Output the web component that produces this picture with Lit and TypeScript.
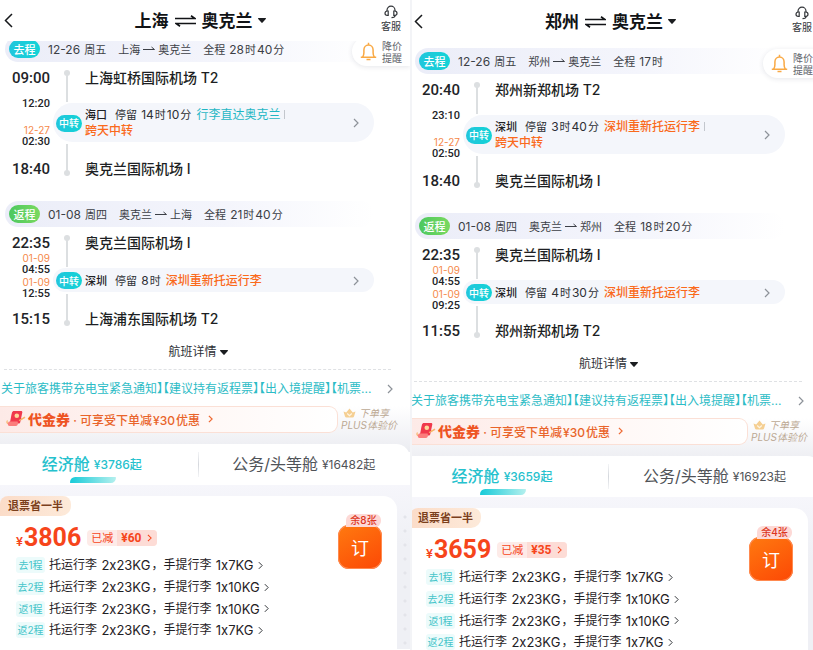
import { LitElement, html, css, svg } from "lit";
import { customElement, property } from "lit/decorators.js";
import { classMap } from "lit/directives/class-map.js";

interface Leg {
  kind: "out" | "back";
  label: string;
  date: string;
  from: string;
  to: string;
  total: string;
  depart: string;
  arrive: string;
  first: string[];
  second: string[];
  fromPort: string;
  toPort: string;
  city: string;
  stay: string;
  note: string;
  noteTone: "teal" | "orange";
  extra?: string;
}

interface Trip {
  from: string;
  to: string;
  legs: Leg[];
  economy: string;
  business: string;
  price: string;
  cut: string;
  left: string;
}

const TRIPS: Trip[] = [
  {
    from: "上海", to: "奥克兰", economy: "3786", business: "16482", price: "3806", cut: "60", left: "8",
    legs: [
      {
        kind: "out", label: "去程", date: "12-26 周五", from: "上海", to: "奥克兰", total: "全程 28时40分",
        depart: "09:00", arrive: "18:40", first: ["12:20"], second: ["12-27", "02:30"],
        fromPort: "上海虹桥国际机场 T2", toPort: "奥克兰国际机场 I",
        city: "海口", stay: "停留 14时10分", note: "行李直达奥克兰", noteTone: "teal", extra: "跨天中转",
      },
      {
        kind: "back", label: "返程", date: "01-08 周四", from: "奥克兰", to: "上海", total: "全程 21时40分",
        depart: "22:35", arrive: "15:15", first: ["01-09", "04:55"], second: ["01-09", "12:55"],
        fromPort: "奥克兰国际机场 I", toPort: "上海浦东国际机场 T2",
        city: "深圳", stay: "停留 8时", note: "深圳重新托运行李", noteTone: "orange",
      },
    ],
  },
  {
    from: "郑州", to: "奥克兰", economy: "3659", business: "16923", price: "3659", cut: "35", left: "4",
    legs: [
      {
        kind: "out", label: "去程", date: "12-26 周五", from: "郑州", to: "奥克兰", total: "全程 17时",
        depart: "20:40", arrive: "18:40", first: ["23:10"], second: ["12-27", "02:50"],
        fromPort: "郑州新郑机场 T2", toPort: "奥克兰国际机场 I",
        city: "深圳", stay: "停留 3时40分", note: "深圳重新托运行李", noteTone: "orange", extra: "跨天中转",
      },
      {
        kind: "back", label: "返程", date: "01-08 周四", from: "奥克兰", to: "郑州", total: "全程 18时20分",
        depart: "22:35", arrive: "11:55", first: ["01-09", "04:55"], second: ["01-09", "09:25"],
        fromPort: "奥克兰国际机场 I", toPort: "郑州新郑机场 T2",
        city: "深圳", stay: "停留 4时30分", note: "深圳重新托运行李", noteTone: "orange",
      },
    ],
  },
];

const BAGGAGE = [
  ["去1程", "1x7KG"],
  ["去2程", "1x10KG"],
  ["返1程", "1x10KG"],
  ["返2程", "1x7KG"],
];

/* Latin runs get their own size next to Chinese characters. */
const mix = (text: string) =>
  text.split(/([\x21-\x7e¥]+)/).map((part, i) => (i % 2 ? html`<span class="num">${part}</span>` : part));

const chevron = html`<svg class="chev" viewBox="0 0 6 10" aria-hidden="true">${svg`<path d="M1 1l4 4-4 4"/>`}</svg>`;
const caret = html`<svg class="caret" viewBox="0 0 8 5" aria-hidden="true">${svg`<path d="M.6 0h6.800c.6 0 .8.600.400 1L4.600 4.600a.8.8 0 0 1-1.200 0L.2 1C-.2.6 0 0 .6 0z"/>`}</svg>`;

@customElement("trip-leg")
export class TripLeg extends LitElement {
  @property({ attribute: false }) leg!: Leg;

  static styles = css`
    :host { display: block; }
    .num { margin: 0 1px; font-size: 12px; }
    .bar {
      display: flex; align-items: center; gap: 7px; height: 26px; box-sizing: border-box;
      margin: 0 36px 6px 5px; padding-left: 4px; border-radius: 13px;
      background: linear-gradient(90deg, #ebedf8, #f4f5fc 60%, #ffffff);
      font-size: 11px; color: #3c3f46; white-space: pre;
    }
    .badge {
      flex: none; display: grid; place-items: center; color: #fff; font-weight: 500; font-size: 11px;
      width: 31px; height: 18px; border-radius: 9px; background: linear-gradient(90deg, #22c6dc, #12d3d6);
    }
    .badge.back { background: linear-gradient(90deg, #4cc860, #7ad95f); }
    .info { display: flex; align-items: center; gap: 12px; }
    .route { display: flex; align-items: center; gap: 3px; }
    .route svg { width: 12px; height: 6px; fill: none; stroke: #3c3f46; }
    .body { display: grid; grid-template-columns: 50px 1fr; column-gap: 3px; margin-right: 36px; }
    .times { display: flex; flex-direction: column; text-align: right; font-family: Roboto, "Liberation Sans", sans-serif; }
    .big { font-size: 15px; line-height: 20px; font-weight: 500; color: #222428; }
    .mid { flex: 1; display: flex; flex-direction: column; justify-content: space-between; padding: 10px 0 12px; font-size: 11px; line-height: 11px; font-weight: 500; color: #222428; }
    .mid.late { padding: 0 0 10px; }
    .mid span { display: block; }
    .mid .day { font: 400 10px/11px Inter, sans-serif; color: #f5894a; }
    .stop { display: flex; gap: 4px; height: 35px; font-size: 14px; line-height: 19px; font-weight: 500; color: #1d1f23; }
    .stop .num { margin: 0; font-size: 14px; }
    .stop.end { height: 37px; }
    .stop.end .port { align-self: flex-end; padding-bottom: 1px; }
    .rail { width: 28px; display: flex; justify-content: center; padding-top: 2px; }
    .rail svg { width: 6px; height: 32px; fill: #dcdfe1; }
    .stop.end .rail svg { transform: rotate(180deg); }
    .transfer {
      display: flex; align-items: center; gap: 4px; width: 100%; box-sizing: border-box; border: 0; text-align: left;
      min-height: 24px; padding: 4px 15px 3px 3px; border-radius: 20px; background: #f4f6fb; font: inherit;
      font-size: 11px; line-height: 16px; color: #1f2125;
    }
    .transfer .badge { width: 26px; height: 17px; margin-right: -1px; font-size: 10px; }
    .text { flex: 1; }
    .stay { margin: 0 2px 0 5px; color: #2c2f34; }
    .city { font-weight: 500; }
    .teal, .orange { font-size: 12px; }
    .teal { color: #1fb6c4; }
    .orange { color: #fa6a1c; font-weight: 500; }
    .sep { display: inline-block; width: 1px; height: 9px; margin-left: 4px; background: #c3c7cd; }
    .chev { width: 6px; height: 10px; fill: none; stroke: #8d9299; stroke-width: 1.2; }
  `;

  private times(list: string[]) {
    return html`<div>${list.map((t) => html`<span class=${t.includes("-") ? "day" : ""}>${t}</span>`)}</div>`;
  }

  private rail() {
    return html`<div class="rail"><svg viewBox="0 0 6 32" aria-hidden="true"><circle cx="3" cy="3" r="3" /><path d="M2 3h2v29H2z" /></svg></div>`;
  }

  render() {
    const l = this.leg;
    return html`
      <div class="bar">
        <span class=${classMap({ badge: true, back: l.kind === "back" })}>${l.label}</span>
        <div class="info">
          <span>${mix(l.date)}</span>
          <span class="route">${l.from}<svg viewBox="0 0 12 6" aria-hidden="true"><path d="M0 3.500h11.500L8.500 1" /></svg>${l.to}</span>
          <span>${mix(l.total)}</span>
        </div>
      </div>
      <div class="body">
        <div class="times">
          <span class="big">${l.depart}</span>
          <div class=${classMap({ mid: true, late: l.first.length > 1 })}>${this.times(l.first)}${this.times(l.second)}</div>
          <span class="big">${l.arrive}</span>
        </div>
        <div>
          <div class="stop">${this.rail()}<span class="port">${mix(l.fromPort)}</span></div>
          <button class="transfer">
            <span class="badge">中转</span>
            <span class="text">
              <span class="city">${l.city}</span><span class="stay">&nbsp;${mix(l.stay)}</span>
              <span class=${l.noteTone}>${l.note}</span>${l.extra ? html`<span class="sep"></span><br /><span class="orange">${l.extra}</span>` : ""}
            </span>
            ${chevron}
          </button>
          <div class="stop end">${this.rail()}<span class="port">${mix(l.toPort)}</span></div>
        </div>
      </div>
    `;
  }
}

@customElement("trip-panel")
export class TripPanel extends LitElement {
  @property({ attribute: false }) trip!: Trip;

  static styles = css`
    :host { display: flex; flex-direction: column; min-width: 0; min-height: 0; overflow: hidden; background: #fff; }
    button { border: 0; padding: 0; background: none; font: inherit; color: inherit; }
    a { color: inherit; text-decoration: none; }
    .caret { width: 8px; height: 5px; fill: #1b1d20; }
    .chev { flex: none; width: 6px; height: 10px; fill: none; stroke: #8d9299; stroke-width: 1.2; }
    header { flex: none; display: grid; grid-template-columns: 28px 1fr 28px; align-items: center; height: 41px; margin: 0 var(--cut-end, 0) 0 var(--cut-start, 0); padding: 0 5px 0 4px; }
    .backbtn svg { display: block; width: 9px; height: 15px; fill: none; stroke: #16181b; stroke-width: 1.5; }
    .title { display: flex; align-items: center; justify-content: center; gap: 6px; margin: 0; padding-right: 9px; font-size: 17px; line-height: 22px; font-weight: 700; color: #111316; }
    .title .swap { width: 21px; height: 12px; fill: none; stroke: #111316; stroke-width: 1.700; }
    .title .caret { margin-left: -1px; }
    .help { align-self: start; display: flex; flex-direction: column; align-items: center; gap: 1px; padding-top: 5px; font-size: 10px; line-height: 12px; color: #33363a; white-space: nowrap; }
    .help svg { width: 14px; height: 14px; fill: none; stroke: #33363a; stroke-width: 1.2; }
    .scroll { flex: 1; min-height: 0; display: flex; overflow: hidden auto; scrollbar-width: none; }
    .sheet { position: relative; flex: 1 0 auto; width: calc(100% - var(--cut-start, 0px) - var(--cut-end, 0px)); height: max-content; min-height: 100%; display: flex; flex-direction: column; margin: var(--pull) var(--cut-end, 0) 0 var(--cut-start, 0); }
    .alert {
      position: absolute; top: 1px; right: 0; display: flex; align-items: center; gap: 5px; width: 58px; height: 29px; box-sizing: border-box; padding-left: 8px;
      border-radius: 15px 0 0 15px; background: #fff; box-shadow: 0 1px 5px rgba(40, 50, 80, 0.12); font-size: 10px; line-height: 12px; color: #63666c; text-align: left;
    }
    .alert svg { flex: none; width: 17px; height: 19px; fill: none; stroke: #f9a944; stroke-width: 1.500; }
    trip-leg + trip-leg { margin-top: 22px; }
    .details { display: flex; align-items: center; justify-content: center; gap: 3px; margin: 15px 14px 0 0; font-size: 12px; line-height: 16px; color: #2e3136; }
    .rule { margin: 9px 19px 0 4px; border-top: 1px dashed #dfe1e4; }
    .notice { display: flex; align-items: center; justify-content: space-between; margin: 10px 17px 0 1px; font-size: 12px; line-height: 18px; color: #2cbcc6; white-space: nowrap; font-feature-settings: "halt"; }
    .promo { flex: none; display: flex; align-items: center; gap: 3px; height: 54px; box-sizing: border-box; padding-bottom: 12px; background: linear-gradient(#ffffff 15%, #ebecf1); }
    .coupon {
      display: flex; align-items: center; width: 338px; height: 27px; box-sizing: border-box; padding-left: 6px; border: 1px solid #fbe0d6; border-left: 0; border-radius: 0 9px 9px 0;
      background: linear-gradient(90deg, #fdeae7, #fff8f6 60%, #ffffff); color: #e9642a; font-size: 12px; font-weight: 500; white-space: pre;
    }
    .coupon svg:first-child { flex: none; width: 20px; height: 16px; margin-right: 2px; }
    .coupon b { font-size: 14px; font-weight: 900; color: #ee5423; }
    .coupon .chev { width: 5px; height: 8px; margin-left: 8px; stroke: #ee6a33; stroke-width: 1.500; }
    .coupon .num { margin: 0 1px; font-size: 12px; }
    .plus { font-size: 10px; line-height: 12px; font-style: italic; color: #bca994; white-space: nowrap; }
    .plus span { display: flex; align-items: center; gap: 3px; padding-left: 2px; }
    .plus svg { width: 13px; height: 10px; }
    .cabins { flex: none; display: grid; grid-template-columns: 198fr 213fr; height: 41px; margin-top: -8px; border-radius: 0 14px 0 0; background: #fff; }
    .cabin { position: relative; display: flex; align-items: center; justify-content: center; gap: 4px; padding-bottom: 3px; color: #505358; font-size: 16px; }
    .cabin small { font-size: 12px; }
    .cabin.on { padding-right: 14px; color: #25c1cd; font-weight: 500; }
    .cabin.on::after { content: ""; position: absolute; left: 70px; bottom: 2px; width: 46px; height: 6px; border-radius: 6px 1px 6px 1px; background: linear-gradient(90deg, #17cbd8, #b5f0ee); }
    .cabin + .cabin::before { content: ""; position: absolute; left: 0; top: 8px; width: 1px; height: 25px; background: linear-gradient(#f3f4f6, #d5d8dd, #f3f4f6); }
    .fares { flex: 1; display: flex; padding: 11px 0 0; background: linear-gradient(#f6f6fb, #eff0f5 60px); }
    .gutter { width: 13px; margin: 16px 0 0; background: radial-gradient(circle at 8px 5px, #e3e4ea 1px, transparent 2px) 0 0 / 13px 14px repeat-y; }
    .card { flex: 1; position: relative; background: #fff; border-radius: 9px 14px 0 0; }
    .tag { display: inline-block; height: 20px; box-sizing: border-box; padding: 0 8px; border-radius: 8px 8px 10px 0; background: linear-gradient(90deg, #fbdcc8, #fdeada); font-size: 11px; line-height: 20px; font-weight: 700; color: #7b3f1c; vertical-align: top; }
    .price { display: flex; align-items: center; height: 34px; margin: 5px 0 0 16px; color: #f6451b; }
    .price b { display: flex; align-items: baseline; gap: 1px; font: 700 25px/34px Roboto, sans-serif; }
    .price i { font: 500 13px Roboto, sans-serif; }
    .cut { display: flex; align-items: center; height: 16px; margin-left: 6px; border-radius: 4px; overflow: hidden; background: #fdebe8; font-size: 11px; line-height: 16px; }
    .cut span { padding: 0 4px; }
    .cut strong { display: flex; align-items: center; gap: 5px; padding: 0 5px 0 4px; background: #fddcd6; font: 700 12px/16px Roboto, sans-serif; }
    .cut .chev { width: 5px; height: 8px; stroke: #f6451b; stroke-width: 1.300; }
    ul { margin: -1px 0 0; padding: 0 0 8px 16px; list-style: none; }
    li a { display: flex; align-items: center; height: 22px; font-size: 12px; line-height: 14px; color: #1f2125; white-space: pre; font-feature-settings: "calt" 0; }
    li + li:nth-child(odd) a { height: 21px; }
    li .num { margin: 0 1px; font-size: 13px; }
    li em { width: 29px; height: 16px; margin-right: 4px; border-radius: 3px; background: #ecfbfb; font-style: normal; font-size: 10px; line-height: 16px; text-align: center; color: #45c5ca; }
    li .chev { width: 5px; height: 9px; margin-left: 3px; stroke: #33363a; }
    .book { position: absolute; top: 29px; right: 15px; width: 44px; height: 44px; border-radius: 11px; background: linear-gradient(150deg, #ff7a10, #fc4805); box-shadow: inset 0 0 0 1px #ff8a50; color: #fff; font-size: 18px; }
    .book span { position: absolute; right: 1px; top: -11px; width: 35px; height: 13px; border-radius: 6px 6px 6px 0; background: #fdd9d6; font-size: 10px; line-height: 13px; font-weight: 500; color: #dc3522; }
  `;

  render() {
    const t = this.trip;
    return html`
      <header>
        <button class="backbtn" aria-label="返回"><svg viewBox="0 0 9 15"><path d="M8 1L1.500 7.500 8 14" /></svg></button>
        <h1 class="title">
          ${t.from}
          <svg class="swap" viewBox="0 0 21 12" aria-hidden="true"><path d="M0 3.500h20L16 .8M21 8.500H1l4 2.700" /></svg>
          ${t.to}${caret}
        </h1>
        <button class="help">
          <svg viewBox="0 0 14 14" aria-hidden="true">
            <path d="M3 6V5.200a4 4 0 0 1 8 0V6M11.300 10.300c-.2 1.600-1.300 2.400-3.800 2.400" />
            <path d="M4.200 6v4.300H3.300C1.900 10.300 1 9.500 1 8.200S1.900 6 3.300 6zM9.800 6v4.300h.9c1.400 0 2.300-.8 2.300-2.100S12.100 6 10.700 6z" />
          </svg>客服
        </button>
      </header>
      <div class="scroll">
        <div class="sheet">
          ${t.legs.map((leg) => html`<trip-leg .leg=${leg}></trip-leg>`)}
          <button class="alert">
            <svg viewBox="0 0 17 19" aria-hidden="true">
              <path d="M.8 15.200h15.400M2.700 15c.9-1.300 1.200-2.400 1.200-4.200V8c0-2.900 1.900-5 4.600-5s4.600 2.100 4.600 5v2.800c0 1.800.3 2.900 1.200 4.200M8.500 3V.8M6.500 17.600h4" />
            </svg>
            <span>降价<br />提醒</span>
          </button>
          <button class="details">航班详情${caret}</button>
          <div class="rule"></div>
          <a class="notice" href="#notice"><span>关于旅客携带充电宝紧急通知】【建议持有返程票】【出入境提醒】【机票...</span>${chevron}</a>
          <div class="promo">
            <a class="coupon" href="#coupon">
              <svg viewBox="0 0 20 16" aria-hidden="true">
                <path d="M1.500 9.500C-.5 12.500 3 13.500 7 12s7-4 12-5.500" fill="none" stroke="#f7b56b" stroke-width="1.200" />
                <path d="M6 1.500C6.300.6 7 0 8 0h7c1 0 1.500.7 1.300 1.600L14.300 11c-.3 1-.8 1.500-1.800 1.500H3.500C4.500 10 5 5 6 1.500z" fill="#f0394c" />
                <path d="M3 10.500h8.500c.8 1.300.4 4.500-1.500 4.500H3.500C1.200 15 1.500 11.500 3 10.500z" fill="#fb7d7c" />
                <circle cx="10.800" cy="4.800" r="2.300" fill="#ffd79a" />
                <path d="M13 9.500c2.200-.8 4-1.800 6-3.500" fill="none" stroke="#f7b56b" stroke-width="1.200" />
              </svg>
              <b>代金券</b><span> · ${mix("可享受下单减¥30优惠")}</span>${chevron}
            </a>
            <div class="plus">
              <span>
                <svg viewBox="0 0 13 10" aria-hidden="true">
                  <path d="M.5 3.500l2.700 1L6.500.5l3.300 4 2.700-1-1.500 5c-.2.700-.7 1-1.500 1h-6c-.8 0-1.300-.3-1.500-1z" fill="#f5cf92" />
                  <path d="M4.200 5.500l2.300 2.200 2.300-2.200" fill="none" stroke="#fff6e4" stroke-width="1.200" />
                </svg>下单享
              </span>
              PLUS体验价
            </div>
          </div>
          <div class="cabins" role="tablist">
            <button class="cabin on" role="tab" aria-selected="true">经济舱<small>¥${t.economy}起</small></button>
            <button class="cabin" role="tab" aria-selected="false"><span>公务/头等舱</span><small>¥${t.business}起</small></button>
          </div>
          <div class="fares">
            <section class="card">
              <span class="tag">退票省一半</span>
              <div class="price">
                <b><i>¥</i>${t.price}</b>
                <button class="cut"><span>已减</span><strong>¥${t.cut}${chevron}</strong></button>
              </div>
              <ul>
                ${BAGGAGE.map(([seg, carry]) => html`<li><a href="#baggage"><em>${seg}</em>${mix(`托运行李 2x23KG，手提行李 ${carry}`)}${chevron}</a></li>`)}
              </ul>
              <button class="book">订<span>余${t.left}张</span></button>
            </section>
            <div class="gutter"></div>
          </div>
        </div>
      </div>
    `;
  }
}

@customElement("app-root")
export class AppRoot extends LitElement {
  static styles = css`
    :host { display: grid; grid-template-columns: 410fr 401fr; column-gap: 2px; height: 100vh; overflow: hidden; background: #f3f4f7; font-family: Inter, "Noto Sans CJK SC", sans-serif; }
    .shanghai { --pull: -5px; }
    .zhengzhou { --pull: 6px; --cut-start: -2px; --cut-end: -8px; padding-top: 1px; }
  `;

  render() {
    return html`
      <trip-panel class="shanghai" .trip=${TRIPS[0]}></trip-panel>
      <trip-panel class="zhengzhou" .trip=${TRIPS[1]}></trip-panel>
    `;
  }
}
